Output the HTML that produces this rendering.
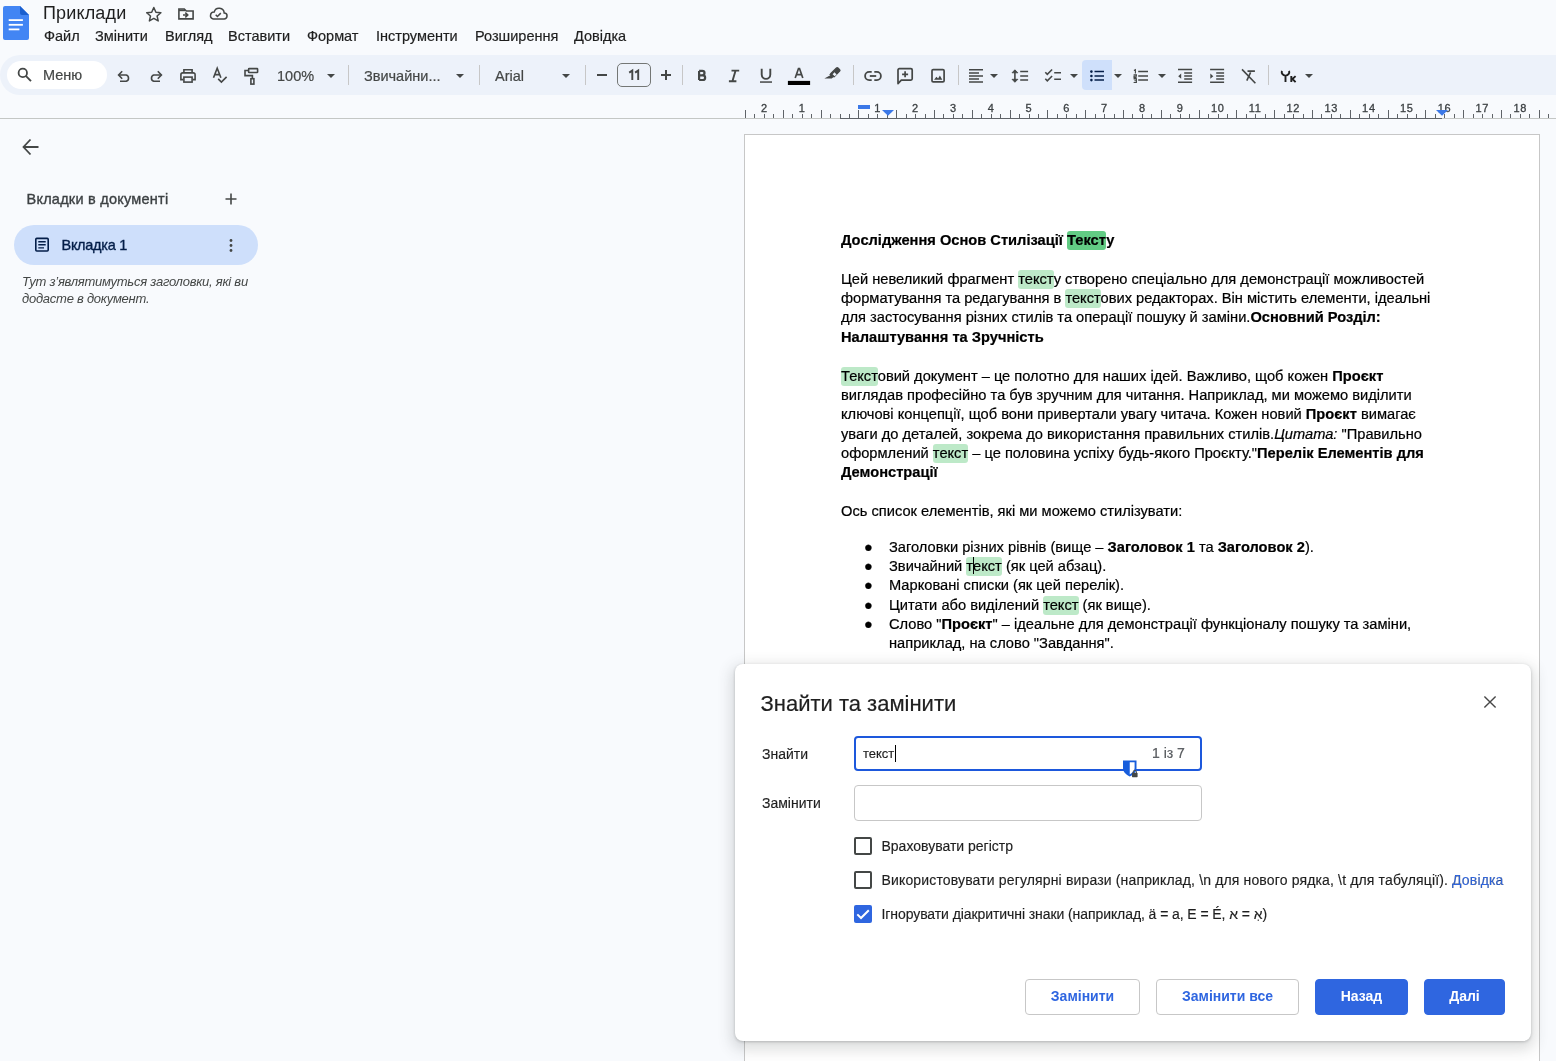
<!DOCTYPE html>
<html><head><meta charset="utf-8">
<style>
*{box-sizing:border-box}
html,body{margin:0;padding:0}
body{width:1556px;height:1061px;background:#f8fafd;position:relative;overflow:hidden;font-family:"Liberation Sans",sans-serif;color:#1f1f1f}
.a{position:absolute}
.menu span{position:absolute;top:28px;font-size:14.5px;color:#1f1f1f;white-space:nowrap;-webkit-text-stroke:0.2px #1f1f1f}
.tb{position:absolute;left:0;top:55px;width:1600px;height:40px;background:#edf2fa;border-radius:20px}
.tt{font-size:14.5px;color:#444746;white-space:nowrap;-webkit-text-stroke:0.2px #444746}
.sep{position:absolute;top:65px;width:1px;height:20px;background:#c7c7c7}
.dd{position:absolute;top:73.5px;width:0;height:0;border-left:4.5px solid transparent;border-right:4.5px solid transparent;border-top:4.5px solid #444746}
.doc{position:absolute;left:841px;font-size:14.67px;line-height:19.33px;color:#000;white-space:nowrap;-webkit-text-stroke:0.2px #000}
.hl{background:#bde9c8;border-radius:3px;padding:0.85px 0 2px}
.hl2{background:#62cc84;border-radius:3px;padding:0.85px 0 2px}
.cur{display:inline-block;width:0;height:17px;border-left:1px solid #000;vertical-align:-3px;margin-right:-1px}
b{font-weight:bold}
.dl{font-size:14px;color:#1f1f1f;white-space:nowrap;-webkit-text-stroke:0.15px #1f1f1f}
.dc{font-size:14px;color:#1f1f1f;white-space:nowrap;-webkit-text-stroke:0.15px #1f1f1f}
.cb{width:18px;height:18px;border:2px solid #444746;border-radius:2px}
.btn{height:36px;border:1px solid #c7c7c7;border-radius:4px;text-align:center;line-height:33.5px;font-size:14px;font-weight:bold;color:#2f66e0;background:#fff}
.pri{background:#2f66e0;border-color:#2f66e0;color:#fff}
</style></head>
<body>
<div id="root" style="position:absolute;left:0;top:0;width:1556px;height:1061px;will-change:transform">
<!-- header -->
<svg class="a" style="left:3px;top:6px" width="26" height="34" viewBox="0 0 26 34">
<path d="M2 0h15l9 9v23a2 2 0 0 1-2 2H2a2 2 0 0 1-2-2V2a2 2 0 0 1 2-2z" fill="#4285f4"/>
<path d="M17 0l9 9h-7a2 2 0 0 1-2-2z" fill="#1a5fcf"/>
<rect x="5.7" y="13.2" width="14.2" height="1.8" fill="#fff"/>
<rect x="5.7" y="17.9" width="14.2" height="1.8" fill="#fff"/>
<rect x="5.7" y="22.5" width="10.7" height="1.8" fill="#fff"/>
</svg>
<div class="a" style="left:43px;top:3px;font-size:18px;color:#1f1f1f;letter-spacing:0.15px">Приклади</div>
<div class="menu">
<span style="left:44px">Файл</span>
<span style="left:95px">Змінити</span>
<span style="left:165px">Вигляд</span>
<span style="left:228px">Вставити</span>
<span style="left:307px">Формат</span>
<span style="left:376px">Інструменти</span>
<span style="left:475px">Розширення</span>
<span style="left:574px">Довідка</span>
</div>
<!-- toolbar -->
<div class="tb"></div>
<!-- toolbar text & controls -->
<div class="a" style="left:7px;top:61px;width:100px;height:28px;background:#fff;border-radius:14px"></div>
<div class="a tt" style="left:43px;top:67px;color:#444746">Меню</div>
<div class="a tt" style="left:277px;top:68px">100%</div>
<div class="dd" style="left:326.5px"></div>
<div class="sep" style="left:348px"></div>
<div class="a tt" style="left:364px;top:68px">Звичайни...</div>
<div class="dd" style="left:455.5px"></div>
<div class="sep" style="left:479px"></div>
<div class="a tt" style="left:495px;top:68px">Arial</div>
<div class="dd" style="left:561.5px"></div>
<div class="sep" style="left:585px"></div>
<div class="a" style="left:596.8px;top:73.9px;width:10.3px;height:2px;background:#444746"></div>
<div class="a" style="left:617px;top:63px;width:34px;height:24px;border:1px solid #747775;border-radius:5px"></div>
<svg class="a" style="left:625px;top:66px" width="18" height="18" viewBox="625 66 18 18" fill="none" stroke="#444746" stroke-width="1.9"><path d="M632.3 79.9 V70.6 L629.2 72.6 M638.2 79.9 V70.6 L635.1 72.6"/></svg>
<div class="a" style="left:660.9px;top:73.9px;width:10.1px;height:2px;background:#444746"></div>
<div class="a" style="left:664.95px;top:69.9px;width:2px;height:10px;background:#444746"></div>
<div class="sep" style="left:682px"></div>
<div class="sep" style="left:853px"></div>
<div class="sep" style="left:958px"></div>
<div class="dd" style="left:990px"></div>
<div class="dd" style="left:1069.5px"></div>
<div class="a" style="left:1082px;top:60px;width:30px;height:30px;background:#cfe0fb;border-radius:4px 0 0 4px"></div>
<div class="dd" style="left:1113.5px"></div>
<div class="dd" style="left:1157.5px"></div>
<div class="sep" style="left:1268px"></div>
<div class="dd" style="left:1304.5px"></div>

<!-- toolbar icons overlay -->
<svg class="a" style="left:0;top:0" width="1556" height="130" viewBox="0 0 1556 130" fill="none" stroke="#444746" stroke-width="1.7" stroke-linecap="butt" stroke-linejoin="miter">
<!-- header star -->
<path d="M153.8 7.5 L155.9 12.2 L160.9 12.7 L157.1 16 L158.2 20.9 L153.8 18.4 L149.4 20.9 L150.5 16 L146.7 12.7 L151.7 12.2 Z" stroke-width="1.5" stroke-linejoin="round"/>
<!-- folder -->
<path d="M178.9 18.9 V9 H184.3 L186.3 11 H193.1 V18.9 Z" stroke-width="1.6"/>
<path d="M179 10.4 H185" stroke-width="1.6"/>
<path d="M183 15 H187.5 M185.3 12.6 L187.8 15 L185.3 17.4" stroke-width="1.5"/>
<!-- cloud -->
<path d="M213.2 18.9 H224.1 A2.9 2.9 0 0 0 224.2 13.1 A5.1 5.1 0 0 0 214.2 12 A3.5 3.5 0 0 0 213.2 18.9 Z" stroke-width="1.5"/>
<path d="M215.7 14.8 L217.4 16.5 L220.8 13.1" stroke-width="1.5"/>

<!-- search -->
<circle cx="22.8" cy="72.9" r="4.2" stroke-width="1.8"/>
<path d="M25.8 75.9 L31 81.1" stroke-width="1.9"/>
<!-- undo -->
<path d="M122.2 71.3 L118.6 75 L122.2 78.7" stroke-width="1.6"/>
<path d="M119.2 75 H126.2 A3.3 3.3 0 0 1 126.2 81.3 H120" stroke-width="1.6"/>
<!-- redo -->
<path d="M157.8 71.3 L161.4 75 L157.8 78.7" stroke-width="1.6"/>
<path d="M160.8 75 H153.8 A3.3 3.3 0 0 0 153.8 81.3 H160" stroke-width="1.6"/>
<!-- print -->
<path d="M183.9 72.6 V69.8 H192.1 V72.6" stroke-width="1.6"/>
<path d="M183.2 79.6 H180.9 V74.7 A1.8 1.8 0 0 1 182.7 72.9 H193.3 A1.8 1.8 0 0 1 195.1 74.7 V79.6 H192.8" stroke-width="1.6"/>
<rect x="183.9" y="77.1" width="8.2" height="5" stroke-width="1.6" fill="#edf2fa"/>
<!-- spellcheck -->
<path d="M213.5 77.8 L217.2 68.3 L220.9 77.8 M214.8 74.6 H219.6" stroke-width="1.6"/>
<path d="M218.2 78.9 L221.4 82.1 L226.6 76.9" stroke-width="1.6"/>
<!-- paint format -->
<rect x="248.6" y="68.6" width="9" height="3.9" rx="0.6" stroke-width="1.6"/>
<path d="M248.4 70.5 H245 V75.6 H252.4 V78.6" stroke-width="1.6"/>
<rect x="250.9" y="78.7" width="3" height="5.4" stroke-width="1.6"/>
</svg>
<svg class="a" style="left:0;top:0" width="1556" height="130" viewBox="0 0 1556 130" fill="none" stroke="#444746" stroke-width="1.7">
<!-- B -->
<path d="M699.1 70.9 V80 M699.1 70.9 H702.3 A2.2 2.2 0 0 1 702.3 75.3 H699.1 M699.1 75.3 H702.8 A2.35 2.35 0 0 1 702.8 80 H699.1" stroke-width="2.2" fill="none"/>
<!-- I -->
<path d="M731.5 70.6 H739.2 M728.9 81.2 H736.4 M735.6 70.6 L732.4 81.2" stroke-width="1.9"/>
<!-- U -->
<path d="M761.7 68.7 V74.6 A4.3 4.3 0 0 0 770.3 74.6 V68.7" stroke-width="1.9"/>
<path d="M760 82.05 H772" stroke-width="1.5"/>
<!-- A text color -->
<path d="M795.2 78 L798.5 68.5 H799.5 L802.8 78 M796.6 74.6 H801.4" stroke-width="1.7"/>
<rect x="787.9" y="80.9" width="22.2" height="4.1" fill="#000" stroke="none"/>
<!-- highlighter -->
<path d="M834.3 76.4 L839.6 71.1 A1 1 0 0 0 839.6 69.7 L837.9 68 A1 1 0 0 0 836.5 68 L831.2 73.3 Z" fill="#444746" stroke="#444746" stroke-width="1.4"/>
<path d="M831.2 73.3 L830.1 74.4 L831.1 75.4 L826.6 78 H831.5 L832.8 76.8 L834.3 76.4" fill="#444746" stroke="#444746" stroke-width="1.2"/>
<path d="M832.6 74.2 L834.5 72.3 L836.6 74.4 L834.7 76.3 Z" fill="#edf2fa" stroke="none"/>
<!-- link -->
<path d="M871.7 71.9 H869.2 A4.1 4.1 0 0 0 869.2 80.1 H871.7 M874.3 71.9 H876.8 A4.1 4.1 0 0 1 876.8 80.1 H874.3" stroke-width="1.8"/>
<path d="M869.8 76 H876.2" stroke-width="1.8"/>
<!-- comment -->
<path d="M898 83.6 V69.9 A1.3 1.3 0 0 1 899.3 68.6 H910.9 A1.3 1.3 0 0 1 912.2 69.9 V78.8 A1.3 1.3 0 0 1 910.9 80.1 H901.3 Z" stroke-width="1.7" stroke-linejoin="round"/>
<path d="M905.1 71.3 V77.3 M902.1 74.3 H908.1" stroke-width="1.7"/>
<!-- image -->
<rect x="932" y="69.6" width="12.1" height="12.3" rx="1.2" stroke-width="1.7"/>
<path d="M934.1 79.8 L936.4 76.7 L938.1 78.6 L939.9 75.6 L942.3 79.8 Z" fill="#444746" stroke="none"/>
<!-- align -->
<path d="M969 69.7 H983 M969 72.9 H979 M969 76 H983 M969 79 H979 M969 82.1 H983" stroke-width="1.5"/>
<!-- line spacing -->
<path d="M1014.9 70.6 V81.4" stroke-width="1.6"/>
<path d="M1012 72.8 L1014.9 69.8 L1017.9 72.8 Z M1012 79.3 L1014.9 82.3 L1017.9 79.3 Z" fill="#444746" stroke-width="0.8"/>
<path d="M1020.2 71.4 H1028.1 M1020.2 76 H1028.1 M1020.2 80.1 H1028.1" stroke-width="1.5"/>
<!-- checklist -->
<path d="M1045.3 72.3 L1047.3 74.3 L1052.1 69.5 M1045.3 78.8 L1047.3 80.8 L1052.1 76" stroke-width="1.6"/>
<path d="M1054.2 72.7 H1061 M1054.2 79.3 H1061" stroke-width="1.5"/>
<!-- bullet highlight -->
<!-- bullets -->
<g stroke="#041e49">
<circle cx="1091.4" cy="71.6" r="1.3" fill="#041e49" stroke="none"/>
<circle cx="1091.4" cy="76" r="1.3" fill="#041e49" stroke="none"/>
<circle cx="1091.4" cy="80.1" r="1.3" fill="#041e49" stroke="none"/>
<path d="M1094.5 71.6 H1104 M1094.5 76 H1104 M1094.5 80.1 H1104" stroke-width="1.5"/>
</g>
<!-- numbered -->
<path d="M1138.2 71.6 H1148 M1138.2 76 H1148 M1138.2 80.1 H1148" stroke-width="1.5"/>
<path d="M1133.9 70.4 L1135.4 69.6 V73.4 M1133.6 74.7 H1136.4 V76.1 H1134 V77.6 H1136.6 M1133.6 78.9 H1136.4 V82.5 H1133.6 M1134.4 80.7 H1136.4" stroke-width="1.1"/>
<!-- decrease indent -->
<path d="M1178 69.5 H1192.1 M1184.2 72.9 H1192.1 M1184.2 76 H1192.1 M1184.2 79.1 H1192.1 M1178 82.3 H1192.1" stroke-width="1.5"/>
<path d="M1181.2 73.6 L1178.2 76.2 L1181.2 78.8 Z" fill="#444746" stroke="none"/>
<!-- increase indent -->
<path d="M1210.1 69.5 H1224.1 M1216.2 72.9 H1224.1 M1216.2 76 H1224.1 M1216.2 79.1 H1224.1 M1210.1 82.3 H1224.1" stroke-width="1.5"/>
<path d="M1210.3 73.6 L1213.3 76.2 L1210.3 78.8 Z" fill="#444746" stroke="none"/>
<!-- clear formatting -->
<path d="M1242 69.4 L1255.4 83.3" stroke-width="1.6"/>
<path d="M1247.5 71.1 H1254.9 M1250.6 72.3 L1246.8 80.6" stroke-width="1.6"/>
<!-- input tools Yк -->
<path d="M1281.9 70.9 A3.6 3.6 0 0 0 1285.5 75.6 A3.6 3.6 0 0 0 1289.1 70.9 M1285.5 75.2 V82.1" stroke="#1f1f1f" stroke-width="1.9"/>
<path d="M1291.3 76.1 V82.1 M1295.6 76.1 L1292.4 79 L1295.6 82.1" stroke="#1f1f1f" stroke-width="1.9"/>
</svg>

<div class="a" style="left:0;top:118px;width:1556px;height:1px;background:#c4c7c5"></div>
<div class="a" style="left:840px;top:118px;width:602px;height:1px;background:#5f6368"></div>
<svg class="a" style="left:0;top:98px" width="1556" height="24" viewBox="0 98 1556 24">
<path d="M745.5 110 V118" stroke="#5f6368" stroke-width="1"/>
<path d="M754.5 114 V118" stroke="#5f6368" stroke-width="1"/>
<path d="M764.5 114 V118" stroke="#5f6368" stroke-width="1"/>
<text x="760.9" y="112" font-family="Liberation Sans" font-size="11" letter-spacing="0.7" fill="#3c4043" stroke="#3c4043" stroke-width="0.3">2</text>
<path d="M773.5 114 V118" stroke="#5f6368" stroke-width="1"/>
<path d="M783.5 110 V118" stroke="#5f6368" stroke-width="1"/>
<path d="M792.5 114 V118" stroke="#5f6368" stroke-width="1"/>
<path d="M802.5 114 V118" stroke="#5f6368" stroke-width="1"/>
<text x="798.7" y="112" font-family="Liberation Sans" font-size="11" letter-spacing="0.7" fill="#3c4043" stroke="#3c4043" stroke-width="0.3">1</text>
<path d="M811.5 114 V118" stroke="#5f6368" stroke-width="1"/>
<path d="M821.5 110 V118" stroke="#5f6368" stroke-width="1"/>
<path d="M830.5 114 V118" stroke="#5f6368" stroke-width="1"/>
<path d="M840.5 114 V118" stroke="#5f6368" stroke-width="1"/>
<path d="M849.5 114 V118" stroke="#5f6368" stroke-width="1"/>
<path d="M858.5 110 V118" stroke="#5f6368" stroke-width="1"/>
<path d="M868.5 114 V118" stroke="#5f6368" stroke-width="1"/>
<path d="M877.5 114 V118" stroke="#5f6368" stroke-width="1"/>
<text x="874.3" y="112" font-family="Liberation Sans" font-size="11" letter-spacing="0.7" fill="#3c4043" stroke="#3c4043" stroke-width="0.3">1</text>
<path d="M887.5 114 V118" stroke="#5f6368" stroke-width="1"/>
<path d="M896.5 110 V118" stroke="#5f6368" stroke-width="1"/>
<path d="M906.5 114 V118" stroke="#5f6368" stroke-width="1"/>
<path d="M915.5 114 V118" stroke="#5f6368" stroke-width="1"/>
<text x="912.1" y="112" font-family="Liberation Sans" font-size="11" letter-spacing="0.7" fill="#3c4043" stroke="#3c4043" stroke-width="0.3">2</text>
<path d="M925.5 114 V118" stroke="#5f6368" stroke-width="1"/>
<path d="M934.5 110 V118" stroke="#5f6368" stroke-width="1"/>
<path d="M943.5 114 V118" stroke="#5f6368" stroke-width="1"/>
<path d="M953.5 114 V118" stroke="#5f6368" stroke-width="1"/>
<text x="949.9" y="112" font-family="Liberation Sans" font-size="11" letter-spacing="0.7" fill="#3c4043" stroke="#3c4043" stroke-width="0.3">3</text>
<path d="M962.5 114 V118" stroke="#5f6368" stroke-width="1"/>
<path d="M972.5 110 V118" stroke="#5f6368" stroke-width="1"/>
<path d="M981.5 114 V118" stroke="#5f6368" stroke-width="1"/>
<path d="M991.5 114 V118" stroke="#5f6368" stroke-width="1"/>
<text x="987.7" y="112" font-family="Liberation Sans" font-size="11" letter-spacing="0.7" fill="#3c4043" stroke="#3c4043" stroke-width="0.3">4</text>
<path d="M1000.5 114 V118" stroke="#5f6368" stroke-width="1"/>
<path d="M1010.5 110 V118" stroke="#5f6368" stroke-width="1"/>
<path d="M1019.5 114 V118" stroke="#5f6368" stroke-width="1"/>
<path d="M1029.5 114 V118" stroke="#5f6368" stroke-width="1"/>
<text x="1025.5" y="112" font-family="Liberation Sans" font-size="11" letter-spacing="0.7" fill="#3c4043" stroke="#3c4043" stroke-width="0.3">5</text>
<path d="M1038.5 114 V118" stroke="#5f6368" stroke-width="1"/>
<path d="M1047.5 110 V118" stroke="#5f6368" stroke-width="1"/>
<path d="M1057.5 114 V118" stroke="#5f6368" stroke-width="1"/>
<path d="M1066.5 114 V118" stroke="#5f6368" stroke-width="1"/>
<text x="1063.3" y="112" font-family="Liberation Sans" font-size="11" letter-spacing="0.7" fill="#3c4043" stroke="#3c4043" stroke-width="0.3">6</text>
<path d="M1076.5 114 V118" stroke="#5f6368" stroke-width="1"/>
<path d="M1085.5 110 V118" stroke="#5f6368" stroke-width="1"/>
<path d="M1095.5 114 V118" stroke="#5f6368" stroke-width="1"/>
<path d="M1104.5 114 V118" stroke="#5f6368" stroke-width="1"/>
<text x="1101.1" y="112" font-family="Liberation Sans" font-size="11" letter-spacing="0.7" fill="#3c4043" stroke="#3c4043" stroke-width="0.3">7</text>
<path d="M1114.5 114 V118" stroke="#5f6368" stroke-width="1"/>
<path d="M1123.5 110 V118" stroke="#5f6368" stroke-width="1"/>
<path d="M1132.5 114 V118" stroke="#5f6368" stroke-width="1"/>
<path d="M1142.5 114 V118" stroke="#5f6368" stroke-width="1"/>
<text x="1138.9" y="112" font-family="Liberation Sans" font-size="11" letter-spacing="0.7" fill="#3c4043" stroke="#3c4043" stroke-width="0.3">8</text>
<path d="M1151.5 114 V118" stroke="#5f6368" stroke-width="1"/>
<path d="M1161.5 110 V118" stroke="#5f6368" stroke-width="1"/>
<path d="M1170.5 114 V118" stroke="#5f6368" stroke-width="1"/>
<path d="M1180.5 114 V118" stroke="#5f6368" stroke-width="1"/>
<text x="1176.7" y="112" font-family="Liberation Sans" font-size="11" letter-spacing="0.7" fill="#3c4043" stroke="#3c4043" stroke-width="0.3">9</text>
<path d="M1189.5 114 V118" stroke="#5f6368" stroke-width="1"/>
<path d="M1199.5 110 V118" stroke="#5f6368" stroke-width="1"/>
<path d="M1208.5 114 V118" stroke="#5f6368" stroke-width="1"/>
<path d="M1218.5 114 V118" stroke="#5f6368" stroke-width="1"/>
<text x="1211.0" y="112" font-family="Liberation Sans" font-size="11" letter-spacing="0.7" fill="#3c4043" stroke="#3c4043" stroke-width="0.3">10</text>
<path d="M1227.5 114 V118" stroke="#5f6368" stroke-width="1"/>
<path d="M1236.5 110 V118" stroke="#5f6368" stroke-width="1"/>
<path d="M1246.5 114 V118" stroke="#5f6368" stroke-width="1"/>
<path d="M1255.5 114 V118" stroke="#5f6368" stroke-width="1"/>
<text x="1248.8" y="112" font-family="Liberation Sans" font-size="11" letter-spacing="0.7" fill="#3c4043" stroke="#3c4043" stroke-width="0.3">11</text>
<path d="M1265.5 114 V118" stroke="#5f6368" stroke-width="1"/>
<path d="M1274.5 110 V118" stroke="#5f6368" stroke-width="1"/>
<path d="M1284.5 114 V118" stroke="#5f6368" stroke-width="1"/>
<path d="M1293.5 114 V118" stroke="#5f6368" stroke-width="1"/>
<text x="1286.5" y="112" font-family="Liberation Sans" font-size="11" letter-spacing="0.7" fill="#3c4043" stroke="#3c4043" stroke-width="0.3">12</text>
<path d="M1303.5 114 V118" stroke="#5f6368" stroke-width="1"/>
<path d="M1312.5 110 V118" stroke="#5f6368" stroke-width="1"/>
<path d="M1321.5 114 V118" stroke="#5f6368" stroke-width="1"/>
<path d="M1331.5 114 V118" stroke="#5f6368" stroke-width="1"/>
<text x="1324.4" y="112" font-family="Liberation Sans" font-size="11" letter-spacing="0.7" fill="#3c4043" stroke="#3c4043" stroke-width="0.3">13</text>
<path d="M1340.5 114 V118" stroke="#5f6368" stroke-width="1"/>
<path d="M1350.5 110 V118" stroke="#5f6368" stroke-width="1"/>
<path d="M1359.5 114 V118" stroke="#5f6368" stroke-width="1"/>
<path d="M1369.5 114 V118" stroke="#5f6368" stroke-width="1"/>
<text x="1362.1" y="112" font-family="Liberation Sans" font-size="11" letter-spacing="0.7" fill="#3c4043" stroke="#3c4043" stroke-width="0.3">14</text>
<path d="M1378.5 114 V118" stroke="#5f6368" stroke-width="1"/>
<path d="M1388.5 110 V118" stroke="#5f6368" stroke-width="1"/>
<path d="M1397.5 114 V118" stroke="#5f6368" stroke-width="1"/>
<path d="M1407.5 114 V118" stroke="#5f6368" stroke-width="1"/>
<text x="1400.0" y="112" font-family="Liberation Sans" font-size="11" letter-spacing="0.7" fill="#3c4043" stroke="#3c4043" stroke-width="0.3">15</text>
<path d="M1416.5 114 V118" stroke="#5f6368" stroke-width="1"/>
<path d="M1425.5 110 V118" stroke="#5f6368" stroke-width="1"/>
<path d="M1435.5 114 V118" stroke="#5f6368" stroke-width="1"/>
<path d="M1444.5 114 V118" stroke="#5f6368" stroke-width="1"/>
<text x="1437.8" y="112" font-family="Liberation Sans" font-size="11" letter-spacing="0.7" fill="#3c4043" stroke="#3c4043" stroke-width="0.3">16</text>
<path d="M1454.5 114 V118" stroke="#5f6368" stroke-width="1"/>
<path d="M1463.5 110 V118" stroke="#5f6368" stroke-width="1"/>
<path d="M1473.5 114 V118" stroke="#5f6368" stroke-width="1"/>
<path d="M1482.5 114 V118" stroke="#5f6368" stroke-width="1"/>
<text x="1475.5" y="112" font-family="Liberation Sans" font-size="11" letter-spacing="0.7" fill="#3c4043" stroke="#3c4043" stroke-width="0.3">17</text>
<path d="M1492.5 114 V118" stroke="#5f6368" stroke-width="1"/>
<path d="M1501.5 110 V118" stroke="#5f6368" stroke-width="1"/>
<path d="M1510.5 114 V118" stroke="#5f6368" stroke-width="1"/>
<path d="M1520.5 114 V118" stroke="#5f6368" stroke-width="1"/>
<text x="1513.4" y="112" font-family="Liberation Sans" font-size="11" letter-spacing="0.7" fill="#3c4043" stroke="#3c4043" stroke-width="0.3">18</text>
<path d="M1529.5 114 V118" stroke="#5f6368" stroke-width="1"/>
<path d="M1539.5 110 V118" stroke="#5f6368" stroke-width="1"/>
<path d="M1548.5 114 V118" stroke="#5f6368" stroke-width="1"/>
<rect x="858" y="105" width="12" height="4" fill="#3b78e7"/>
<path d="M882 110 H894 L888 115.8 Z" fill="#3b78e7"/>
<path d="M1436 110 H1448 L1442 115.8 Z" fill="#3b78e7"/>
</svg>
<!-- sidebar -->
<div class="a sbh" style="left:26.5px;top:190.8px;font-size:14.5px;color:#3c4043;-webkit-text-stroke:0.35px #3c4043;letter-spacing:0.24px">Вкладки в документі</div>
<div class="a" style="left:14px;top:225px;width:244px;height:40px;background:#cedffb;border-radius:20px"></div>
<div class="a sbh" style="left:61.5px;top:236.8px;font-size:14.5px;color:#041e49;-webkit-text-stroke:0.35px #041e49;letter-spacing:-0.28px">Вкладка 1</div>
<div class="a sbh" style="left:22px;top:274px;font-size:13px;line-height:16.5px;color:#444746;font-style:italic;letter-spacing:-0.25px">Тут з’являтимуться заголовки, які ви<br>додасте в документ.</div>
<svg class="a" style="left:0;top:130px" width="260" height="140" viewBox="0 130 260 140" fill="none" stroke="#444746" stroke-width="1.8">
<path d="M23.5 147 H38.5 M30.5 139.5 L23.5 147 L30.5 154.5" />
<path d="M231 193.5 V204.5 M225.5 199 H236.5" stroke-width="1.6"/>
<rect x="35.8" y="238.4" width="12.4" height="12.6" rx="1" stroke="#041e49" stroke-width="1.6"/>
<path d="M38.3 241.7 H45.7 M38.3 244.8 H45.7 M38.3 247.9 H44" stroke="#041e49" stroke-width="1.4"/>
<circle cx="231" cy="240.5" r="1.4" fill="#444746" stroke="none"/>
<circle cx="231" cy="245.5" r="1.4" fill="#444746" stroke="none"/>
<circle cx="231" cy="250.5" r="1.4" fill="#444746" stroke="none"/>
</svg>

<!-- page -->
<div class="a" style="left:744px;top:134px;width:796px;height:1000px;background:#fff;border:1px solid #c7c7c7"></div>
<div class="doc" style="top:230.8px"><b>Дослідження Основ Стилізації <span class="hl2">Текст</span>у</b></div>
<div class="doc" style="top:269.8px">Цей невеликий фрагмент <span class="hl">текст</span>у створено спеціально для демонстрації можливостей<br>форматування та редагування в <span class="hl">текст</span>ових редакторах. Він містить елементи, ідеальні<br>для застосування різних стилів та операції пошуку й заміни.<b>Основний Розділ:</b><br><b>Налаштування та Зручність</b></div>
<div class="doc" style="top:366.8px"><span class="hl">Текст</span>овий документ – це полотно для наших ідей. Важливо, щоб кожен <b>Проєкт</b><br>виглядав професійно та був зручним для читання. Наприклад, ми можемо виділити<br>ключові концепції, щоб вони привертали увагу читача. Кожен новий <b>Проєкт</b> вимагає<br>уваги до деталей, зокрема до використання правильних стилів.<i>Цитата:</i> "Правильно<br>оформлений <span class="hl">текст</span> – це половина успіху будь-якого Проєкту."<b>Перелік Елементів для</b><br><b>Демонстрації</b></div>
<div class="doc" style="top:501.8px">Ось список елементів, які ми можемо стилізувати:</div>
<div class="doc" style="top:537.8px;left:889px">Заголовки різних рівнів (вище – <b>Заголовок 1</b> та <b>Заголовок 2</b>).<br>Звичайний <span class="hl">т<span class="cur"></span>екст</span> (як цей абзац).<br>Марковані списки (як цей перелік).<br>Цитати або виділений <span class="hl">текст</span> (як вище).<br>Слово "<b>Проєкт</b>" – ідеальне для демонстрації функціоналу пошуку та заміни,<br>наприклад, на слово "Завдання".</div>
<div class="doc" style="top:537.8px;left:864px">●<br>●<br>●<br>●<br>●</div>

<!-- dialog -->
<div class="a" style="left:735px;top:664px;width:796px;height:377px;background:#fff;border-radius:8px;box-shadow:0 5px 14px 4px rgba(60,64,67,.17),0 1px 3px rgba(60,64,67,.28)"></div>
<div class="a dlg" style="left:760.5px;top:690.7px;font-size:22px;color:#1f1f1f;-webkit-text-stroke:0.2px #1f1f1f">Знайти та замінити</div>
<svg class="a" style="left:1480px;top:692px" width="20" height="20" viewBox="0 0 20 20"><path d="M4.4 4.4 L15.6 15.6 M15.6 4.4 L4.4 15.6" stroke="#474747" stroke-width="1.4"/></svg>
<div class="a dl" style="left:762px;top:746px">Знайти</div>
<div class="a dl" style="left:762px;top:795px">Замінити</div>
<div class="a" style="left:854px;top:735.5px;width:347.5px;height:35px;border:2px solid #1d58dc;border-radius:4px"></div>
<div class="a dl" style="left:863px;top:745px;color:#1f1f1f;font-size:13px">текст<span style="display:inline-block;width:1px;height:17px;background:#000;vertical-align:-4px;margin-left:1px"></span></div>
<div class="a dl" style="left:1152px;top:744.5px;color:#5f6368">1 із 7</div>
<div class="a" style="left:854px;top:785px;width:347.5px;height:35.5px;border:1px solid #c7c7c7;border-radius:4px"></div>
<!-- password manager icon -->
<svg class="a" style="left:1120px;top:759px" width="20" height="20" viewBox="0 0 20 20">
<path d="M3 1.5 H16.5 V9 C16.5 13 13.5 15.5 9.75 17.5 C6 15.5 3 13 3 9 Z" fill="#175ddc"/>
<path d="M9.75 3.3 H14.6 V9 C14.6 11.8 12.6 13.8 9.75 15.4 Z" fill="#fff"/>
<rect x="12" y="13.8" width="5.6" height="4.4" rx="0.6" fill="#444746"/>
<path d="M13.2 14 V12.9 A1.6 1.6 0 0 1 16.4 12.9 V14" stroke="#444746" stroke-width="1" fill="none"/>
</svg>
<!-- checkboxes -->
<div class="a cb" style="left:854px;top:837px"></div>
<div class="a cb" style="left:854px;top:871px"></div>
<div class="a" style="left:854px;top:905px;width:18px;height:18px;background:#2f66e0;border-radius:2px"></div>
<svg class="a" style="left:854px;top:905px" width="18" height="18" viewBox="0 0 18 18"><path d="M3.3 9.4 L7 13 L14.8 5.2" stroke="#fff" stroke-width="2" fill="none"/></svg>
<div class="a dc" style="left:881.5px;top:837.5px">Враховувати регістр</div>
<div class="a dc" style="left:881.5px;top:871.5px;letter-spacing:0.15px">Використовувати регулярні вирази (наприклад, \n для нового рядка, \t для табуляції). <span style="color:#2f66e0">Довідка</span></div>
<div class="a dc" style="left:881.5px;top:905.5px;letter-spacing:-0.08px">Ігнорувати діакритичні знаки (наприклад, ä = a, E = É, <bdo dir="ltr">א = אֽ</bdo>)</div>
<!-- buttons -->
<div class="a btn" style="left:1025px;top:979px;width:115px">Замінити</div>
<div class="a btn" style="left:1156px;top:979px;width:143px">Замінити все</div>
<div class="a btn pri" style="left:1315px;top:979px;width:93px">Назад</div>
<div class="a btn pri" style="left:1424px;top:979px;width:81px">Далі</div>

</div>
</body></html>
